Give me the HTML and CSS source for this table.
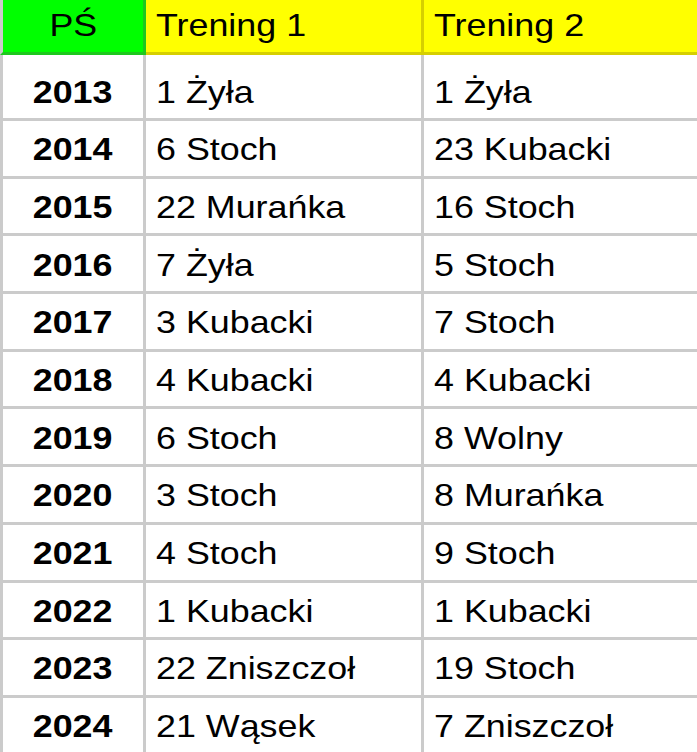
FILE: index.html
```html
<!DOCTYPE html>
<html lang="pl">
<head>
<meta charset="utf-8">
<title>PŚ – treningi</title>
<link rel="stylesheet" href="styles.css">
</head>
<body>
<table class="sheet">
  <colgroup>
    <col class="c-year">
    <col class="c-t1">
    <col class="c-t2">
  </colgroup>
  <thead>
    <tr class="head">
      <th class="h-ps"><span class="txt">PŚ</span></th>
      <th class="h-tr"><span class="txt">Trening 1</span></th>
      <th class="h-tr"><span class="txt">Trening 2</span></th>
    </tr>
  </thead>
  <tbody>
    <tr class="first"><td class="year"><span class="txt">2013</span></td><td class="val"><span class="txt">1 Żyła</span></td><td class="val"><span class="txt">1 Żyła</span></td></tr>
    <tr><td class="year"><span class="txt">2014</span></td><td class="val"><span class="txt">6 Stoch</span></td><td class="val"><span class="txt">23 Kubacki</span></td></tr>
    <tr><td class="year"><span class="txt">2015</span></td><td class="val"><span class="txt">22 Murańka</span></td><td class="val"><span class="txt">16 Stoch</span></td></tr>
    <tr><td class="year"><span class="txt">2016</span></td><td class="val"><span class="txt">7 Żyła</span></td><td class="val"><span class="txt">5 Stoch</span></td></tr>
    <tr><td class="year"><span class="txt">2017</span></td><td class="val"><span class="txt">3 Kubacki</span></td><td class="val"><span class="txt">7 Stoch</span></td></tr>
    <tr><td class="year"><span class="txt">2018</span></td><td class="val"><span class="txt">4 Kubacki</span></td><td class="val"><span class="txt">4 Kubacki</span></td></tr>
    <tr><td class="year"><span class="txt">2019</span></td><td class="val"><span class="txt">6 Stoch</span></td><td class="val"><span class="txt">8 Wolny</span></td></tr>
    <tr><td class="year"><span class="txt">2020</span></td><td class="val"><span class="txt">3 Stoch</span></td><td class="val"><span class="txt">8 Murańka</span></td></tr>
    <tr><td class="year"><span class="txt">2021</span></td><td class="val"><span class="txt">4 Stoch</span></td><td class="val"><span class="txt">9 Stoch</span></td></tr>
    <tr><td class="year"><span class="txt">2022</span></td><td class="val"><span class="txt">1 Kubacki</span></td><td class="val"><span class="txt">1 Kubacki</span></td></tr>
    <tr><td class="year"><span class="txt">2023</span></td><td class="val"><span class="txt">22 Zniszczoł</span></td><td class="val"><span class="txt">19 Stoch</span></td></tr>
    <tr><td class="year"><span class="txt">2024</span></td><td class="val"><span class="txt">21 Wąsek</span></td><td class="val"><span class="txt">7 Zniszczoł</span></td></tr>
  </tbody>
</table>
</body>
</html>
```

FILE: styles.css
```css
html, body {
  margin: 0;
  padding: 0;
  background: #ffffff;
  overflow: hidden;
}

.sheet {
  border-collapse: separate;
  border-spacing: 0;
  table-layout: fixed;
  width: 697px;
  font-family: "Liberation Sans", Arial, sans-serif;
  font-size: 32px;
  color: #000;
}

.c-year { width: 146px; }
.c-t1 { width: 278px; }
.c-t2 { width: 273px; }

.sheet th,
.sheet td {
  box-sizing: border-box;
  padding: 0 0 9.5px 10px;
  line-height: 34px;
  vertical-align: bottom;
  text-align: left;
  white-space: nowrap;
  overflow: hidden;
  border-right: 3px solid #cbcbcb;
  border-bottom: 3px solid #cbcbcb;
  font-weight: normal;
}

.txt {
  display: inline-block;
  transform: scaleX(1.12);
  transform-origin: left bottom;
}

.sheet th:last-child,
.sheet td:last-child {
  border-right: 0;
}

.sheet th:first-child,
.sheet td:first-child {
  border-left: 3px solid #cbcbcb;
  text-align: center;
  padding-left: 0;
}

.sheet th:first-child .txt,
.sheet td:first-child .txt {
  transform-origin: center bottom;
}

.sheet .head th {
  height: 55px;
  padding-bottom: 10px;
}

.sheet th.h-ps {
  background: #00ff00;
  border-bottom-color: #1ec81e;
  border-right-color: #1ec81e;
}

.sheet th.h-tr {
  background: #ffff00;
  border-bottom-color: #d6cf00;
  border-right-color: #d6cf00;
}

.sheet tbody td {
  height: 57.7px;
}

.sheet tbody tr.first td {
  height: 66px;
}

.sheet td.year {
  font-weight: bold;
}
```
